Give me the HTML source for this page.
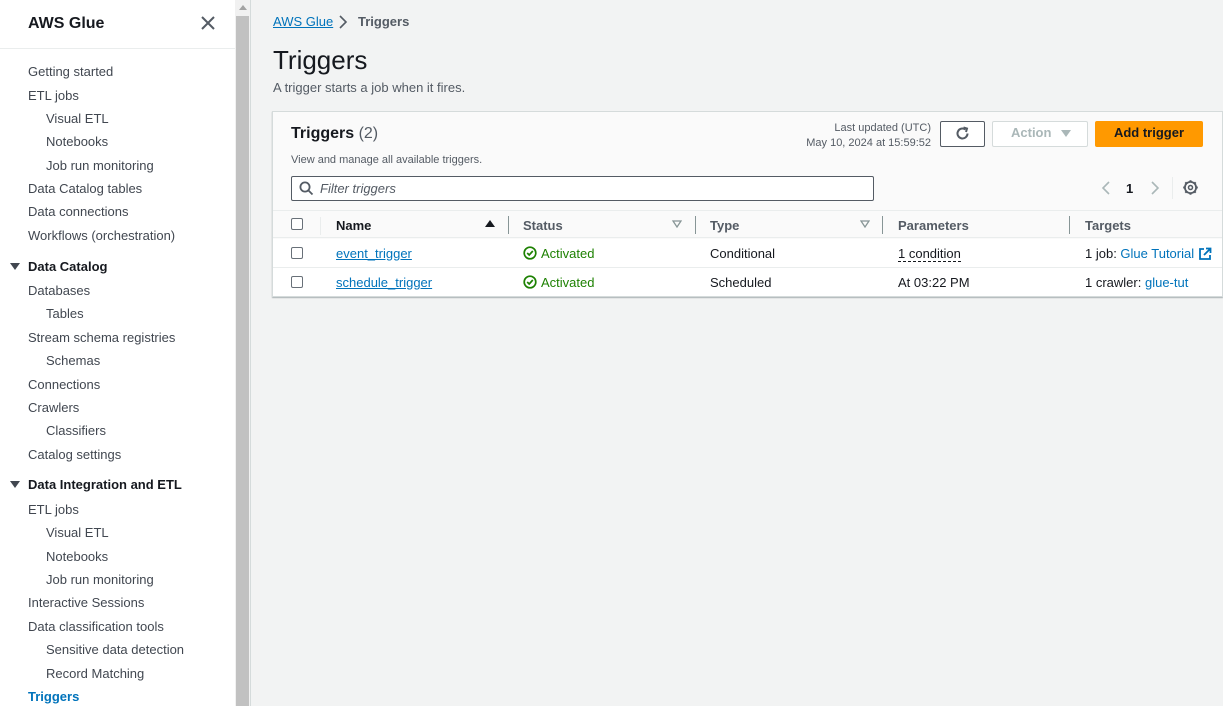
<!DOCTYPE html>
<html><head><style>
*{margin:0;padding:0;box-sizing:border-box}
body{width:1223px;height:706px;overflow:hidden;font-family:"Liberation Sans",sans-serif;font-size:13px;color:#16191f;background:#f2f3f3;position:relative}
.a{position:absolute;white-space:nowrap}
#side{position:absolute;left:0;top:0;width:235px;height:706px;background:#fff}
.n{position:absolute;left:28px;color:#414750;font-size:13px;line-height:16px}
.n2{left:46px}
.h{font-weight:bold;color:#16191f}
.tri{position:absolute;left:10px;width:0;height:0;border-left:5px solid transparent;border-right:5px solid transparent;border-top:7px solid #414750}
.lnk{color:#0073bb;text-decoration:underline}
.cb{position:absolute;left:291px;width:12px;height:12px;border:1px solid #687078;border-radius:2px;background:#fff}
.sep{position:absolute;width:1px;height:18px;background:#879596}
</style></head><body>
<div id="side">
<div class="a" style="left:28px;top:15px;font-size:16px;font-weight:bold">AWS Glue</div>
<svg class="a" style="left:201px;top:16px" width="14" height="14"><path d="M1 1L13 13M13 1L1 13" stroke="#545b64" stroke-width="2"/></svg>
<div class="a" style="left:0;top:48px;width:235px;height:1px;background:#eaeded"></div>
<div class="n" style="top:64px">Getting started</div>
<div class="n" style="top:88px">ETL jobs</div>
<div class="n n2" style="top:111px">Visual ETL</div>
<div class="n n2" style="top:134px">Notebooks</div>
<div class="n n2" style="top:158px">Job run monitoring</div>
<div class="n" style="top:181px">Data Catalog tables</div>
<div class="n" style="top:204px">Data connections</div>
<div class="n" style="top:228px">Workflows (orchestration)</div>
<div class="tri" style="top:263px"></div>
<div class="n h" style="top:259px">Data Catalog</div>
<div class="n" style="top:283px">Databases</div>
<div class="n n2" style="top:306px">Tables</div>
<div class="n" style="top:330px">Stream schema registries</div>
<div class="n n2" style="top:353px">Schemas</div>
<div class="n" style="top:377px">Connections</div>
<div class="n" style="top:400px">Crawlers</div>
<div class="n n2" style="top:423px">Classifiers</div>
<div class="n" style="top:447px">Catalog settings</div>
<div class="tri" style="top:481px"></div>
<div class="n h" style="top:477px">Data Integration and ETL</div>
<div class="n" style="top:502px">ETL jobs</div>
<div class="n n2" style="top:525px">Visual ETL</div>
<div class="n n2" style="top:549px">Notebooks</div>
<div class="n n2" style="top:572px">Job run monitoring</div>
<div class="n" style="top:595px">Interactive Sessions</div>
<div class="n" style="top:619px">Data classification tools</div>
<div class="n n2" style="top:642px">Sensitive data detection</div>
<div class="n n2" style="top:666px">Record Matching</div>
<div class="n h" style="top:689px;color:#0073bb">Triggers</div>
</div>
<div class="a" style="left:235px;top:0;width:15px;height:706px;background:#f1f1f1"></div>
<div class="a" style="left:236px;top:16px;width:13px;height:690px;background:#c1c1c1"></div>
<div class="a" style="left:239px;top:5px;width:0;height:0;border-left:4px solid transparent;border-right:4px solid transparent;border-bottom:5px solid #a3a3a3"></div>
<div class="a" style="left:250px;top:0;width:1px;height:706px;background:#d5dbdb"></div>

<div class="a lnk" style="left:273px;top:14px">AWS Glue</div>
<svg class="a" style="left:338px;top:15px" width="10" height="14"><path d="M2 1L8 7L2 13" stroke="#545b64" stroke-width="1.6" fill="none"/></svg>
<div class="a" style="left:358px;top:14px;font-weight:bold;color:#545b64">Triggers</div>
<div class="a" style="left:273px;top:45px;font-size:26px">Triggers</div>
<div class="a" style="left:273px;top:80px;color:#545b64">A trigger starts a job when it fires.</div>

<div class="a" style="left:272px;top:111px;width:951px;height:186px;background:#fafafa;border:1px solid #d5dbdb;box-shadow:0 1px 1px rgba(0,28,36,.3)"></div>
<div class="a" style="left:291px;top:125px;font-size:16px;font-weight:bold">Triggers <span style="font-weight:normal;color:#545b64">(2)</span></div>
<div class="a" style="left:291px;top:154px;font-size:11px;color:#545b64">View and manage all available triggers.</div>
<div class="a" style="left:780px;top:121px;width:151px;text-align:right;font-size:11px;color:#545b64;line-height:15px">Last updated (UTC)<br>May 10, 2024 at 15:59:52</div>
<div class="a" style="left:940px;top:121px;width:45px;height:26px;border:1px solid #545b64;border-radius:2px;background:#fff"></div>
<svg class="a" style="left:954px;top:125px" width="17" height="17"><path d="M13.5 8.5A5 5 0 1 1 11.5 4.5" stroke="#545b64" stroke-width="2" fill="none"/><path d="M9.5 2.5L13 3.5L12 7" stroke="#545b64" stroke-width="2" fill="none"/></svg>
<div class="a" style="left:992px;top:121px;width:96px;height:26px;border:1px solid #d5dbdb;border-radius:2px;background:#fff"></div>
<div class="a" style="left:1011px;top:125px;font-weight:bold;color:#aab7b8">Action</div>
<div class="a" style="left:1061px;top:130px;border-left:5px solid transparent;border-right:5px solid transparent;border-top:7px solid #aab7b8"></div>
<div class="a" style="left:1095px;top:121px;width:108px;height:26px;background:#ff9900;border-radius:2px"></div>
<div class="a" style="left:1095px;top:125px;width:108px;text-align:center;font-weight:bold">Add trigger</div>

<div class="a" style="left:291px;top:176px;width:583px;height:25px;border:1px solid #545b64;border-radius:2px;background:#fff"></div>
<svg class="a" style="left:299px;top:181px" width="15" height="15"><circle cx="6" cy="6" r="4.6" stroke="#545b64" stroke-width="1.8" fill="none"/><path d="M9.5 9.5L13.5 13.5" stroke="#545b64" stroke-width="1.8"/></svg>
<div class="a" style="left:320px;top:181px;font-style:italic;color:#545b64">Filter triggers</div>
<svg class="a" style="left:1100px;top:180px" width="12" height="16"><path d="M9 2L3 8L9 14" stroke="#aab7b8" stroke-width="1.6" fill="none"/></svg>
<div class="a" style="left:1126px;top:181px;font-weight:bold">1</div>
<svg class="a" style="left:1149px;top:180px" width="12" height="16"><path d="M3 2L9 8L3 14" stroke="#aab7b8" stroke-width="1.6" fill="none"/></svg>
<div class="a" style="left:1172px;top:177px;width:1px;height:22px;background:#eaeded"></div>
<svg class="a" style="left:1182px;top:179px" width="17" height="17"><circle cx="8.5" cy="8.5" r="5.6" stroke="#545b64" stroke-width="1.8" fill="none"/><circle cx="8.5" cy="8.5" r="2" stroke="#545b64" stroke-width="1.5" fill="none"/><path d="M8.5 1.2V3M8.5 14V15.8M1.2 8.5H3M14 8.5H15.8M3.3 3.3L4.6 4.6M12.4 12.4L13.7 13.7M3.3 13.7L4.6 12.4M12.4 4.6L13.7 3.3" stroke="#545b64" stroke-width="2"/></svg>

<div class="a" style="left:273px;top:210px;width:949px;height:1px;background:#eaeded"></div>
<div class="a" style="left:273px;top:211px;width:949px;height:27px;background:#fafafa;border-bottom:1px solid #eaeded"></div>
<div class="a" style="left:273px;top:239px;width:949px;height:57px;background:#fff"></div>
<div class="a" style="left:273px;top:267px;width:949px;height:1px;background:#eaeded"></div>
<div class="cb" style="top:218px"></div>
<div class="cb" style="top:247px"></div>
<div class="cb" style="top:276px"></div>
<div class="a" style="left:320px;top:217px;width:1px;height:18px;background:#eaeded"></div>
<div class="a" style="left:336px;top:218px;font-weight:bold">Name</div>
<div class="a" style="left:485px;top:220px;border-left:5px solid transparent;border-right:5px solid transparent;border-bottom:7px solid #16191f"></div>
<div class="sep" style="left:508px;top:216px"></div>
<div class="a" style="left:523px;top:218px;font-weight:bold;color:#545b64">Status</div>
<svg class="a" style="left:672px;top:220px" width="10" height="8"><path d="M1 1H9L5 7Z" stroke="#879596" stroke-width="1.3" fill="none"/></svg>
<div class="sep" style="left:695px;top:216px"></div>
<div class="a" style="left:710px;top:218px;font-weight:bold;color:#545b64">Type</div>
<svg class="a" style="left:860px;top:220px" width="10" height="8"><path d="M1 1H9L5 7Z" stroke="#879596" stroke-width="1.3" fill="none"/></svg>
<div class="sep" style="left:882px;top:216px"></div>
<div class="a" style="left:898px;top:218px;font-weight:bold;color:#545b64">Parameters</div>
<div class="sep" style="left:1069px;top:216px"></div>
<div class="a" style="left:1085px;top:218px;font-weight:bold;color:#545b64">Targets</div>

<div class="a lnk" style="left:336px;top:246px">event_trigger</div>
<div class="a lnk" style="left:336px;top:275px">schedule_trigger</div>
<svg class="a" style="left:523px;top:246px" width="14" height="14"><circle cx="7" cy="7" r="5.8" stroke="#1d8102" stroke-width="1.7" fill="none"/><path d="M4.2 7L6.2 9L9.8 5" stroke="#1d8102" stroke-width="1.7" fill="none"/></svg>
<div class="a" style="left:541px;top:246px;color:#1d8102">Activated</div>
<svg class="a" style="left:523px;top:275px" width="14" height="14"><circle cx="7" cy="7" r="5.8" stroke="#1d8102" stroke-width="1.7" fill="none"/><path d="M4.2 7L6.2 9L9.8 5" stroke="#1d8102" stroke-width="1.7" fill="none"/></svg>
<div class="a" style="left:541px;top:275px;color:#1d8102">Activated</div>
<div class="a" style="left:710px;top:246px">Conditional</div>
<div class="a" style="left:710px;top:275px">Scheduled</div>
<div class="a" style="left:898px;top:246px;border-bottom:1px dashed #16191f;line-height:15px">1 condition</div>
<div class="a" style="left:898px;top:275px">At 03:22 PM</div>
<div class="a" style="left:1085px;top:246px">1 job: <span style="color:#0073bb">Glue Tutorial</span></div>
<svg class="a" style="left:1198px;top:247px" width="14" height="14"><path d="M6 2H2V12H12V8" stroke="#0073bb" stroke-width="1.8" fill="none"/><path d="M8 1.5H12.5V6M12.5 1.5L6 8" stroke="#0073bb" stroke-width="1.8" fill="none"/></svg>
<div class="a" style="left:1085px;top:275px">1 crawler: <span style="color:#0073bb">glue-tut</span></div>
</body></html>
